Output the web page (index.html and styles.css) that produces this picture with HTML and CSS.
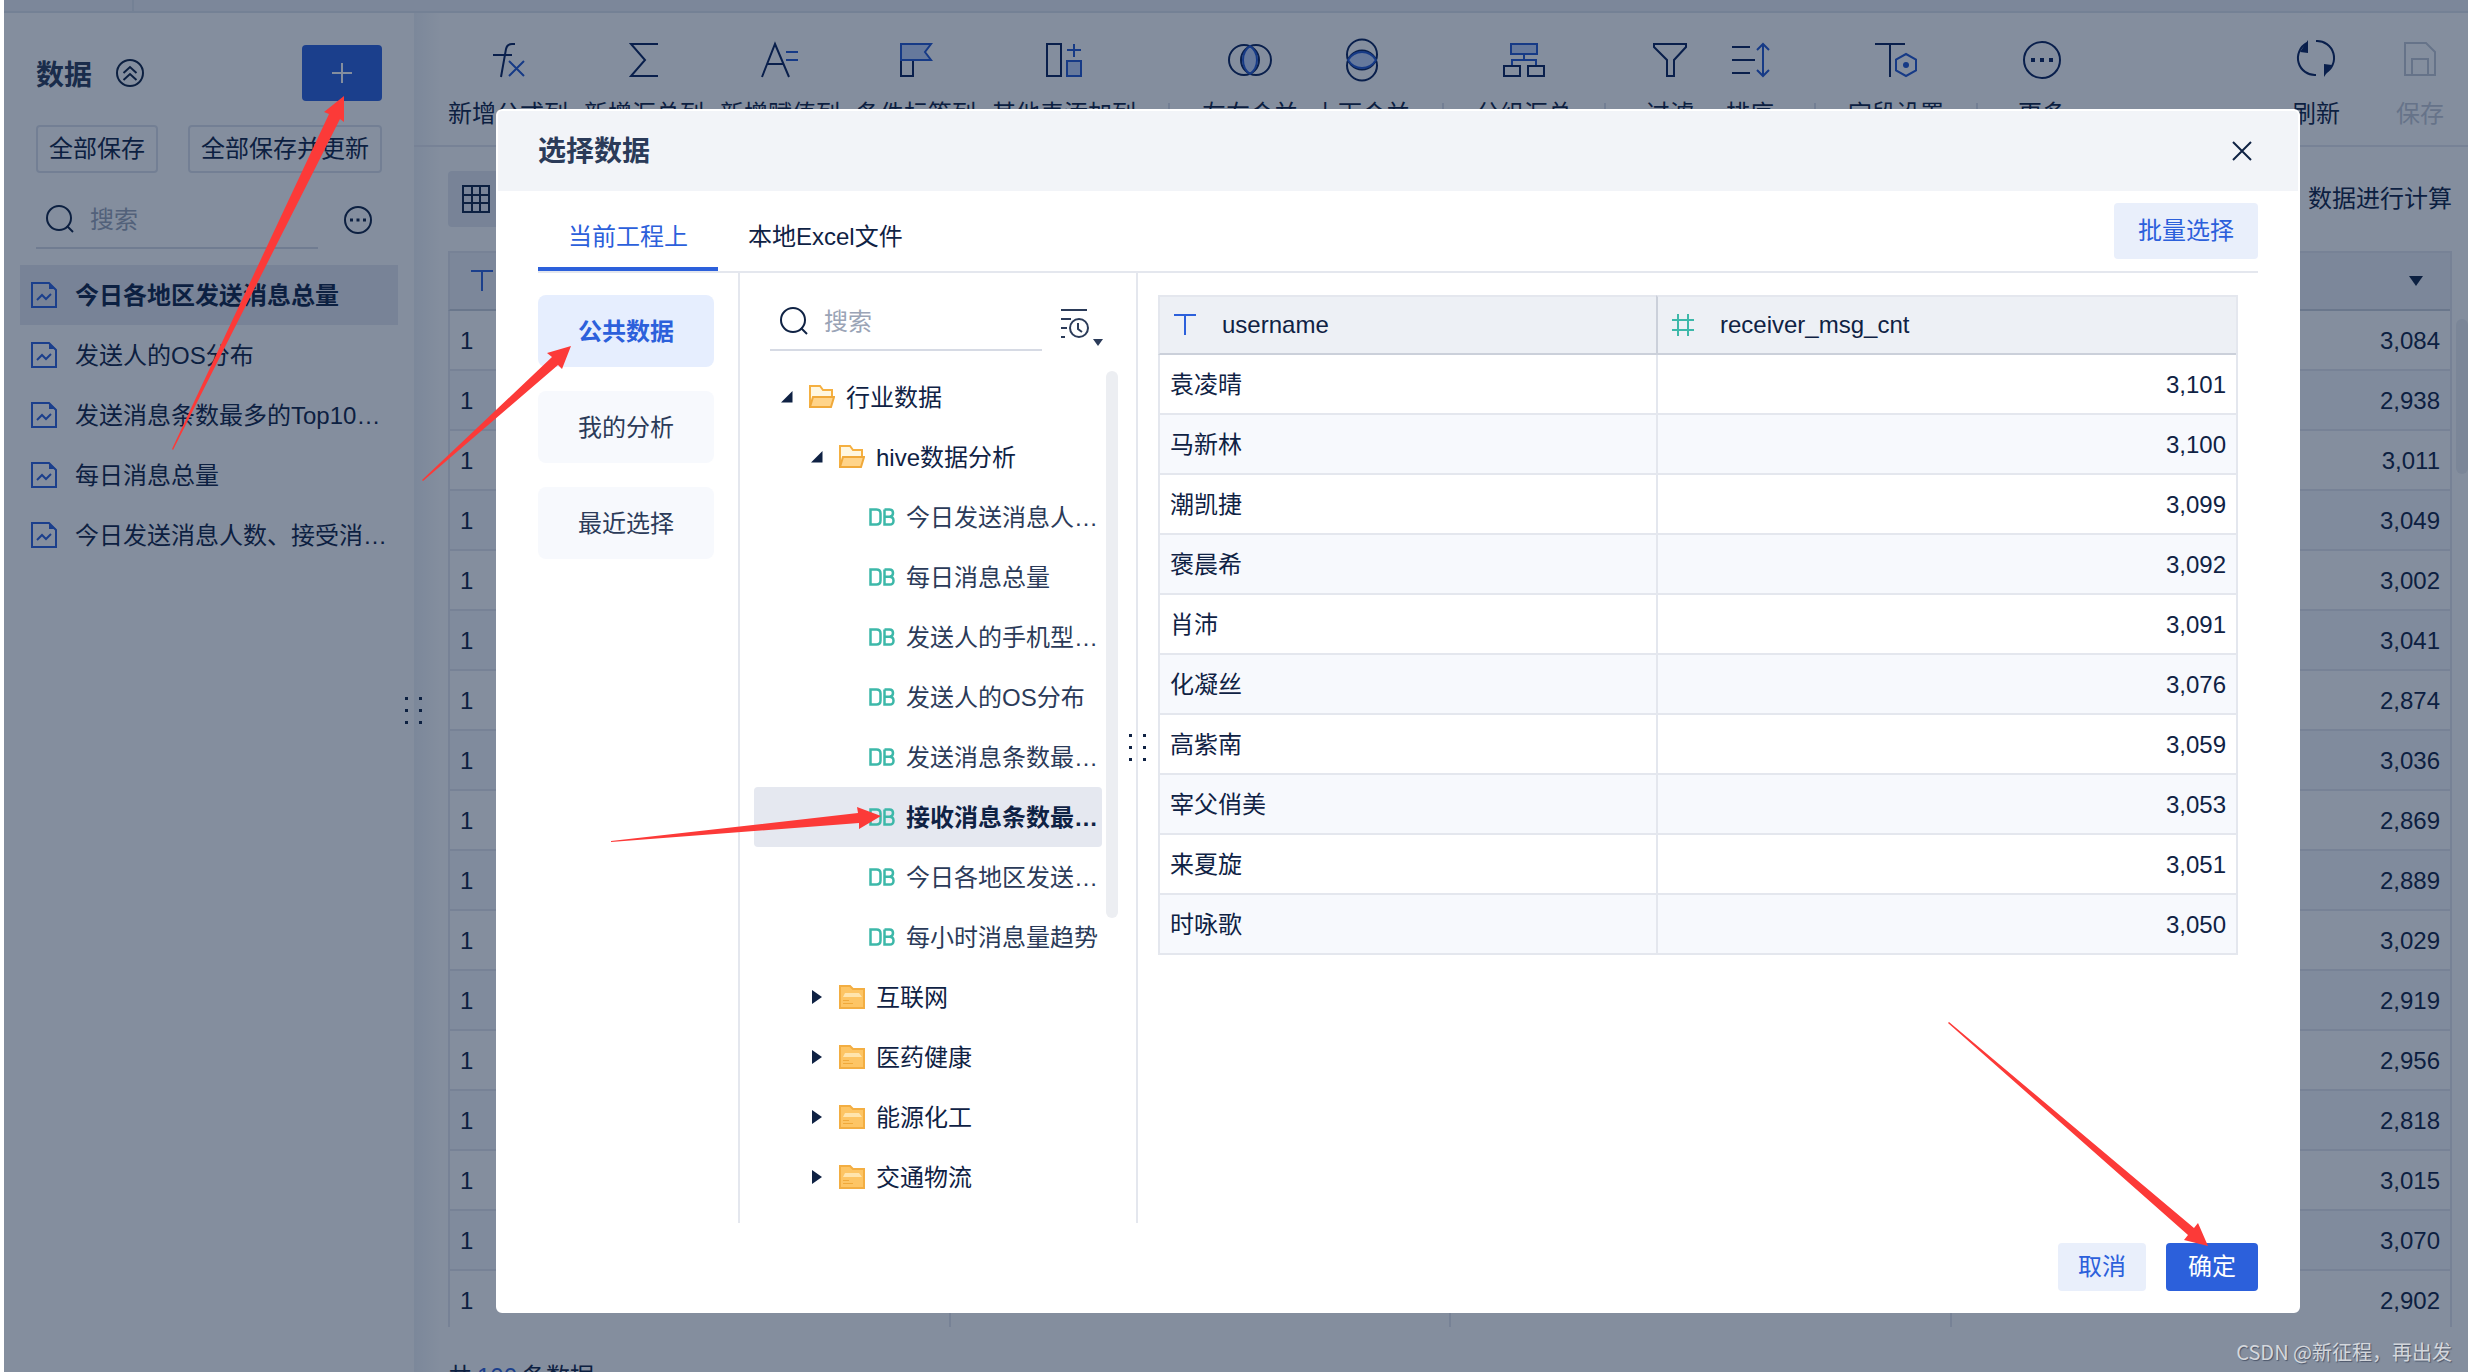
FILE: index.html
```html
<!DOCTYPE html>
<html lang="zh-CN">
<head>
<meta charset="utf-8">
<title>选择数据</title>
<meta name="viewport" content="width=device-width, initial-scale=1">
<link rel="stylesheet" href="styles.css">
</head>
<body>
<svg class="sprite" aria-hidden="true">
  <symbol id="i-search" viewBox="0 0 28 28"><circle cx="13" cy="13" r="12"/><path d="M21 21l6 6"/></symbol>
  <symbol id="i-chart" viewBox="0 0 26 26"><path d="M1 1h17l7 7v17H1z"/><path class="solid" d="M18 1l7 6h-7z"/><path d="M6 18l5-5 4 4 5-5"/></symbol>
  <symbol id="i-more" viewBox="0 0 28 28"><circle cx="14" cy="14" r="13"/><path class="dots" d="M6 12.500h3v3H6zM12.500 12.500h3v3h-3zM19 12.500h3v3h-3z"/></symbol>
  <symbol id="i-db" viewBox="0 0 26 18"><path stroke-width="2.500" d="M1.500 1.500h6q4 0 4 4v7q0 4-4 4h-6zM15.500 1.500h5q3.500 0 3.500 3.500t-3.500 3.700h-5M20.500 8.700q4 0 4 4t-4 3.800h-5V1.500"/></symbol>
  <symbol id="i-open" viewBox="0 0 26 24"><path fill="#fff7e0" stroke="#f5b041" stroke-width="2" d="M1 22V1h10l3 4h9v8"/><path fill="#ffd48a" stroke="#f0a93a" stroke-width="2" d="M4 12h21l-3 10H1z"/></symbol>
  <symbol id="i-folder" viewBox="0 0 26 24"><path fill="#fdc565" stroke="#f3ae42" stroke-width="2" d="M1 1h10l3 3h11v19H1z"/><path fill="#ffe5ae" d="M6 8h14l3 4H4z"/><path stroke="#f0a93a" stroke-width="1" d="M4 15.500h6M4 18.500h10"/></symbol>
  <symbol id="i-caret-open" viewBox="0 0 12 12"><path d="M11.500 0v11.500H0z"/></symbol>
  <symbol id="i-caret" viewBox="0 0 12 14"><path d="M1 0l10 7-10 7z"/></symbol>
  <symbol id="i-text" viewBox="0 0 24 24"><path d="M1 2h22M12 2v20"/></symbol>
  <symbol id="i-down" viewBox="0 0 16 12"><path d="M1 1h14L8 11z"/></symbol>
  <symbol id="i-grip" viewBox="0 0 18 28"><path d="M0 0h3v3H0zM14 0h3v3h-3zM0 12h3v3H0zM14 12h3v3h-3zM0 24h3v3H0zM14 24h3v3h-3z"/></symbol>
</svg>

<div class="app">
  <div class="topbar"><div class="topbar-tab"></div></div>
  <div class="workspace">
    <aside class="sidebar">
      <div class="side-head">
        <h1 class="side-title">数据</h1>
        <svg class="ico28" viewBox="0 0 28 28"><circle cx="14" cy="14" r="13"/><path d="M7.500 14l6.500-6 6.500 6M7.500 21l6.500-6 6.500 6"/></svg>
        <button class="add" aria-label="添加"><svg viewBox="0 0 22 22"><path d="M11 1v20M1 11h20"/></svg></button>
      </div>
      <div class="side-actions"><button class="ghost">全部保存</button><button class="ghost">全部保存并更新</button></div>
      <div class="side-search">
        <label class="search"><svg class="ico28"><use href="#i-search"/></svg><input type="text" placeholder="搜索" aria-label="搜索数据"></label>
        <svg class="ico28"><use href="#i-more"/></svg>
      </div>
      <ul class="data-list">
        <li class="data-item current"><svg><use href="#i-chart"/></svg><span>今日各地区发送消息总量</span></li>
        <li class="data-item"><svg><use href="#i-chart"/></svg><span>发送人的OS分布</span></li>
        <li class="data-item"><svg><use href="#i-chart"/></svg><span>发送消息条数最多的Top10用户</span></li>
        <li class="data-item"><svg><use href="#i-chart"/></svg><span>每日消息总量</span></li>
        <li class="data-item"><svg><use href="#i-chart"/></svg><span>今日发送消息人数、接受消息人数</span></li>
      </ul>
      <svg class="grip side-grip"><use href="#i-grip"/></svg>
    </aside>

    <main class="main">
      <div class="toolbar">
        <button class="tool"><svg viewBox="0 0 44 44"><path d="M29 6h-3q-5 0-6 5l-5 28M7 17h19"/><path class="blue" d="M23 23l15 15M38 23L23 38"/></svg><span>新增公式列</span></button>
        <button class="tool"><svg viewBox="0 0 44 44"><path d="M36 6H9l14 16L9 38h27"/></svg><span>新增汇总列</span></button>
        <button class="tool"><svg viewBox="0 0 44 44"><path d="M4 39L17 6l14 33M9 26h17"/><path class="blue" d="M28 14h12M28 22h12"/></svg><span>新增赋值列</span></button>
        <button class="tool"><svg viewBox="0 0 44 44"><path d="M7 21v17h12V21"/><path class="blue fill" d="M7 6h30l-6 8 6 8H7z"/></svg><span>条件标签列</span></button>
        <button class="tool"><svg viewBox="0 0 44 44"><path d="M5 6h14v32H5z"/><path class="blue" d="M32 6v13M25 12h14"/><path class="blue fill" d="M25 23h14v15H25z"/></svg><span>其他表添加列</span></button>
        <i class="sep"></i>
        <button class="tool"><svg viewBox="0 0 44 44"><path class="fill nostroke" d="M22 8q7 5 7 14t-7 14q-7-5-7-14t7-14z"/><circle cx="16" cy="22" r="15"/><circle cx="28" cy="22" r="15"/><path class="blue" d="M22 8q-7 5-7 14t7 14q7-5 7-14t-7-14z"/></svg><span>左右合并</span></button>
        <button class="tool"><svg viewBox="0 0 44 44"><circle cx="22" cy="16.500" r="15"/><circle cx="22" cy="27.500" r="15"/><path class="blue fill" d="M8 22q5-8 14-8t14 8q-5 8-14 8t-14-8z"/></svg><span>上下合并</span></button>
        <i class="sep"></i>
        <button class="tool"><svg viewBox="0 0 44 44"><path class="blue fill" d="M9 6h26v10H9z"/><path class="blue" d="M22 16v6M10 28v-6h24v6"/><path d="M2 28h16v10H2zM26 28h16v10H26z"/></svg><span>分组汇总</span></button>
        <i class="sep"></i>
        <button class="tool"><svg viewBox="0 0 44 44"><path d="M6 6h32v3L26 22v16h-7V22L6 9z"/></svg><span>过滤</span></button>
        <button class="tool"><svg viewBox="0 0 44 44"><path d="M4 9h18M4 22h23M4 35h18"/><path class="blue" d="M35 6v32M29 12l6-6 6 6M29 32l6 6 6-6"/></svg><span>排序</span></button>
        <i class="sep"></i>
        <button class="tool"><svg viewBox="0 0 44 44"><path d="M1 6h30M16 6v33"/><path class="blue" d="M32 16l10 5.500v11L32 38l-10-5.500v-11z"/><circle class="bluedot" cx="32" cy="27" r="3"/></svg><span>字段设置</span></button>
        <i class="sep"></i>
        <button class="tool"><svg viewBox="0 0 44 44"><circle cx="22" cy="22" r="18"/><path class="dots" d="M11 20h4v4h-4zM20 20h4v4h-4zM29 20h4v4h-4z"/></svg><span>更多</span></button>
        <div class="tool-end">
          <button class="tool"><svg viewBox="0 0 44 44"><path d="M22 3a17 17 0 0 1 9 32M22 37A17 17 0 0 1 13 5"/><path class="dots" d="M6 14l8-12v13zM38 27l-8 12V26z"/></svg><span>刷新</span></button>
          <button class="tool off" disabled><svg viewBox="0 0 44 44"><path d="M7 5h21l9 9v23H7zM14 37V21h16v16"/></svg><span>保存</span></button>
        </div>
      </div>
      <div class="viewbar">
        <button class="view-switch" aria-label="表格视图"><svg viewBox="0 0 28 28"><path d="M1 1h26v26H1zM1 10h26M1 18h26M10 1v26M18 1v26"/></svg></button>
        <span>数据进行计算</span>
      </div>
      <div class="grid-area">
        <table class="grid back-grid">
          <thead><tr><th><svg class="type"><use href="#i-text"/></svg></th><th></th><th></th><th class="num"><svg class="down"><use href="#i-down"/></svg></th></tr></thead>
          <tbody>
            <tr><td>1</td><td></td><td></td><td class="num">3,084</td></tr>
            <tr><td>1</td><td></td><td></td><td class="num">2,938</td></tr>
            <tr><td>1</td><td></td><td></td><td class="num">3,011</td></tr>
            <tr><td>1</td><td></td><td></td><td class="num">3,049</td></tr>
            <tr><td>1</td><td></td><td></td><td class="num">3,002</td></tr>
            <tr><td>1</td><td></td><td></td><td class="num">3,041</td></tr>
            <tr><td>1</td><td></td><td></td><td class="num">2,874</td></tr>
            <tr><td>1</td><td></td><td></td><td class="num">3,036</td></tr>
            <tr><td>1</td><td></td><td></td><td class="num">2,869</td></tr>
            <tr><td>1</td><td></td><td></td><td class="num">2,889</td></tr>
            <tr><td>1</td><td></td><td></td><td class="num">3,029</td></tr>
            <tr><td>1</td><td></td><td></td><td class="num">2,919</td></tr>
            <tr><td>1</td><td></td><td></td><td class="num">2,956</td></tr>
            <tr><td>1</td><td></td><td></td><td class="num">2,818</td></tr>
            <tr><td>1</td><td></td><td></td><td class="num">3,015</td></tr>
            <tr><td>1</td><td></td><td></td><td class="num">3,070</td></tr>
            <tr><td>1</td><td></td><td></td><td class="num">2,902</td></tr>
          </tbody>
        </table>
        <div class="grid-scroll"></div>
      </div>
      <p class="total">共<b>100</b>条数据</p>
    </main>
  </div>

  <div class="mask">
    <section class="dialog" role="dialog" aria-labelledby="dlg-title">
      <header class="dlg-head">
        <h2 id="dlg-title">选择数据</h2>
        <button class="close" aria-label="关闭"><svg viewBox="0 0 22 22"><path d="M2 2l18 18M20 2L2 20"/></svg></button>
      </header>
      <div class="tabs">
        <button class="tab active">当前工程上</button>
        <button class="tab">本地Excel文件</button>
        <button class="btn soft batch">批量选择</button>
      </div>
      <div class="dlg-body">
        <nav class="sources">
          <button class="source active">公共数据</button>
          <button class="source">我的分析</button>
          <button class="source">最近选择</button>
        </nav>
        <div class="picker">
          <div class="picker-search">
            <label class="search"><svg class="ico28"><use href="#i-search"/></svg><input type="text" placeholder="搜索" aria-label="搜索目录"></label>
            <button class="sort" aria-label="排序方式"><svg viewBox="0 0 44 40"><path d="M1 2h26M1 11h10M1 20h6M1 29h4"/><circle cx="19" cy="20" r="9"/><path d="M18 15v6l4 3"/><path class="dots" d="M33 31h10l-5 7z"/></svg></button>
          </div>
          <div class="tree-wrap">
            <ul class="tree">
              <li class="node l1"><svg class="caret"><use href="#i-caret-open"/></svg><svg class="folder"><use href="#i-open"/></svg><span>行业数据</span></li>
              <li class="node l2"><svg class="caret"><use href="#i-caret-open"/></svg><svg class="folder"><use href="#i-open"/></svg><span>hive数据分析</span></li>
              <li class="node l3"><svg class="db"><use href="#i-db"/></svg><span>今日发送消息人数统计</span></li>
              <li class="node l3"><svg class="db"><use href="#i-db"/></svg><span>每日消息总量</span></li>
              <li class="node l3"><svg class="db"><use href="#i-db"/></svg><span>发送人的手机型号分布</span></li>
              <li class="node l3"><svg class="db"><use href="#i-db"/></svg><span>发送人的OS分布</span></li>
              <li class="node l3"><svg class="db"><use href="#i-db"/></svg><span>发送消息条数最多用户</span></li>
              <li class="node l3 picked"><svg class="db"><use href="#i-db"/></svg><span>接收消息条数最多用户</span></li>
              <li class="node l3"><svg class="db"><use href="#i-db"/></svg><span>今日各地区发送总量</span></li>
              <li class="node l3"><svg class="db"><use href="#i-db"/></svg><span>每小时消息量趋势</span></li>
              <li class="node l2"><svg class="caret"><use href="#i-caret"/></svg><svg class="folder"><use href="#i-folder"/></svg><span>互联网</span></li>
              <li class="node l2"><svg class="caret"><use href="#i-caret"/></svg><svg class="folder"><use href="#i-folder"/></svg><span>医药健康</span></li>
              <li class="node l2"><svg class="caret"><use href="#i-caret"/></svg><svg class="folder"><use href="#i-folder"/></svg><span>能源化工</span></li>
              <li class="node l2"><svg class="caret"><use href="#i-caret"/></svg><svg class="folder"><use href="#i-folder"/></svg><span>交通物流</span></li>
            </ul>
            <div class="tree-scroll"></div>
          </div>
          <svg class="grip picker-grip"><use href="#i-grip"/></svg>
        </div>
        <div class="preview">
          <table class="grid">
            <colgroup><col class="col-name"><col></colgroup>
            <thead><tr>
              <th><div class="th"><svg class="type"><use href="#i-text"/></svg>username</div></th>
              <th><div class="th"><svg class="type green" viewBox="0 0 24 24"><path d="M7 1v22M17 1v22M1 7h22M1 17h22"/></svg>receiver_msg_cnt</div></th>
            </tr></thead>
            <tbody>
              <tr><td>袁凌晴</td><td class="num">3,101</td></tr>
              <tr><td>马新林</td><td class="num">3,100</td></tr>
              <tr><td>潮凯捷</td><td class="num">3,099</td></tr>
              <tr><td>褒晨希</td><td class="num">3,092</td></tr>
              <tr><td>肖沛</td><td class="num">3,091</td></tr>
              <tr><td>化凝丝</td><td class="num">3,076</td></tr>
              <tr><td>高紫南</td><td class="num">3,059</td></tr>
              <tr><td>宰父俏美</td><td class="num">3,053</td></tr>
              <tr><td>来夏旋</td><td class="num">3,051</td></tr>
              <tr><td>时咏歌</td><td class="num">3,050</td></tr>
            </tbody>
          </table>
        </div>
      </div>
      <footer class="dlg-foot">
        <button class="btn soft">取消</button>
        <button class="btn primary">确定</button>
      </footer>
    </section>
  </div>
</div>

<svg class="arrows" viewBox="0 0 2468 1372" aria-hidden="true">
  <path d="M344 96L324 112 329 114 172 449 173 450 340 119 344 122z"/>
  <path d="M571 346L547 353 552 357 422 480 423 481 558 365 562 369z"/>
  <path d="M881 816L857 807 858 813 611 841 611 842 859 823 859 829z"/>
  <path d="M2208 1246L2198 1223 2194 1228 1949 1022 1948 1023 2188 1235 2184 1240z"/>
</svg>
<div class="watermark">CSDN @新征程，再出发</div>
</body>
</html>
```
FILE: styles.css
```css
:root {
  --ink: #0f2244;
  --ink-soft: #2b3b59;
  --blue: #2c60db;
  --line: #e4e7ee;
  --line-strong: #cbd0da;
  --zebra: #f7f9fd;
}

* { box-sizing: border-box; }

body {
  margin: 0;
  padding-left: 4px;
  height: 100vh;
  overflow: hidden;
  background: #fff;
  color: var(--ink);
  font: 24px/36px "Liberation Sans", "Noto Sans CJK SC", sans-serif;
}

button, input { font: inherit; color: inherit; }
button { border: 0; padding: 0; background: none; cursor: pointer; }
ul { list-style: none; margin: 0; padding: 0; }
h1, h2, p { margin: 0; }
svg { flex: none; display: block; fill: none; stroke: currentColor; stroke-width: 2; }
.sprite { position: absolute; width: 0; height: 0; }
.solid, .dots { fill: currentColor; stroke: none; }
.ico28 { width: 28px; height: 28px; }
.grip { width: 18px; height: 28px; fill: var(--ink); stroke: none; }

.app { position: relative; height: 100%; overflow: hidden; display: flex; flex-direction: column; }

.topbar { flex: none; height: 13px; background: #eef1f6; border-bottom: 2px solid #dfe4ec; }
.topbar-tab { width: 130px; height: 11px; border-right: 2px solid #dfe4ec; }

.workspace { flex: 1; min-height: 0; display: flex; }

/* sidebar */
.sidebar { position: relative; flex: none; width: 410px; padding: 32px 16px 0; }
.side-head { display: flex; align-items: center; padding: 0 16px; height: 56px; }
.side-title { font-size: 28px; line-height: 40px; padding-top: 6px; color: var(--ink-soft); margin-right: 24px; }
.add { margin-left: auto; width: 80px; height: 56px; border-radius: 4px; background: var(--blue); color: #fff; display: grid; place-items: center; }
.add svg { width: 22px; height: 22px; }
.side-actions { display: flex; justify-content: space-between; padding: 24px 16px 0; }
.ghost { height: 48px; padding: 0 11px; border: 2px solid #dde1ea; border-radius: 4px; line-height: 44px; }
.side-search { display: flex; align-items: center; justify-content: space-between; padding: 18px 26px 16px 16px; }
.search { display: flex; align-items: center; gap: 16px; height: 58px; padding-left: 10px; border-bottom: 2px solid #d6dae4; }
.search input { width: 100%; min-width: 0; border: 0; padding: 2px 0 0; outline: 0; background: none; height: 38px; }
.search input::placeholder { color: #9aa4b6; opacity: 1; }
.side-search .search { width: 282px; }
.data-item { display: flex; align-items: center; gap: 18px; height: 60px; padding: 0 10px 0 11px; }
.data-item svg { width: 26px; height: 26px; color: var(--blue); }
.data-item span { padding-top: 2px; overflow: hidden; white-space: nowrap; text-overflow: ellipsis; }
.data-item.current { background: #e6e9f1; font-weight: bold; }
.side-grip { position: absolute; right: -9px; top: calc(50% + 4px); }

/* main area */
.main { flex: 1; min-width: 0; display: flex; flex-direction: column; background: linear-gradient(90deg, #eef2f7, #fff 28px); }
.toolbar { flex: none; display: flex; gap: 16px; height: 134px; padding: 25px 16px 0 34px; border-bottom: 2px solid var(--line); }
.tool { display: flex; flex-direction: column; align-items: center; gap: 14px; min-width: 64px; height: 94px; white-space: nowrap; }
.tool svg { width: 44px; height: 44px; color: #09215a; stroke-width: 2; }
.tool .blue { stroke: #2256cf; }
.tool .fill { fill: #c2d4fb; }
.tool .bluedot { fill: #2256cf; stroke: none; }
.tool .fill.nostroke { stroke: none; }
.tool.off, .tool.off svg { color: #c3c9d5; }
.sep { width: 2px; height: 20px; margin: 65px 16px 0; background: #dde1ea; }
.tool-end { display: flex; gap: 40px; margin-left: auto; }

.viewbar { flex: none; display: flex; align-items: center; justify-content: space-between; padding: 24px 16px 24px 34px; }
.view-switch { width: 56px; height: 56px; border-radius: 4px; background: #e6e9f1; display: grid; place-items: center; }
.view-switch svg { width: 28px; height: 28px; }
.grid-area { flex: none; height: 1076px; overflow: hidden; display: flex; padding-left: 34px; gap: 4px; }
.grid-scroll { flex: none; width: 12px; height: 155px; margin-top: 68px; border-radius: 6px; background: #eceff3; }
.total { padding: 32px 34px; white-space: nowrap; }
.total b { margin: 0 5px; font-weight: normal; color: var(--blue); }

/* data tables */
.grid { width: 100%; table-layout: fixed; border-collapse: separate; border-spacing: 0; border-right: 2px solid var(--line); }
.grid tr { height: 60px; }
.grid th { padding: 0 13px; font-weight: normal; text-align: left; background: #edf0f5; border-top: 2px solid var(--line); border-bottom: 2px solid var(--line-strong); border-left: 2px solid var(--line-strong); }
.grid th:first-child { border-left-color: var(--line); }
.grid td { padding: 2px 10px 0; border-bottom: 2px solid var(--line); border-left: 2px solid var(--line); }
.grid tbody tr:nth-child(even) { background: var(--zebra); }
.grid .num { text-align: right; }
.back-grid th { padding: 0 20px; background: #eef1f7; }
.back-grid th, .back-grid th.num { padding-right: 26px; }
.type { width: 24px; height: 24px; color: var(--blue); }
.type.green { color: #3db8a9; }
.down { width: 16px; height: 12px; margin-left: auto; fill: var(--ink); stroke: none; }
.th { display: flex; align-items: center; gap: 25px; }
.col-name { width: 498px; }

/* dialog */
.mask { position: absolute; inset: 0; background: rgba(10, 29, 61, 0.5); padding: 109px 168px 0 492px; }
.dialog { border: 2px solid #fff; border-radius: 6px; background: #fff; overflow: hidden; }
.dlg-head { display: flex; align-items: center; justify-content: space-between; height: 80px; padding: 0 45px 0 40px; background: #f2f4f8; }
.dlg-head h2 { font-size: 28px; line-height: 40px; padding-top: 2px; color: var(--ink-soft); }
.close, .close svg { width: 22px; height: 22px; }
.tabs { display: flex; height: 82px; margin: 0 40px; border-bottom: 2px solid var(--line); }
.tab { padding: 16px 30px 0; border-bottom: 4px solid transparent; white-space: nowrap; }
.tab.active { color: var(--blue); border-color: var(--blue); }
.btn { height: 48px; padding: 0 20px; border-radius: 4px; white-space: nowrap; }
.btn.soft { background: #e9effb; color: var(--blue); }
.btn.primary { background: var(--blue); color: #fff; padding: 0 22px; }
.btn.batch { height: 56px; margin: 12px 0 0 auto; padding: 0 24px; }

.dlg-body { display: flex; height: 950px; padding: 0 60px 0 40px; }
.sources { flex: none; width: 200px; padding: 22px 24px 0 0; display: flex; flex-direction: column; gap: 24px; }
.source { height: 72px; padding-top: 2px; border-radius: 8px; background: var(--zebra); color: var(--ink-soft); }
.source.active { background: #e6eefe; color: var(--blue); font-weight: bold; }

.picker { position: relative; flex: none; width: 400px; border: solid var(--line); border-width: 0 2px; padding: 20px 18px 0 14px; }
.picker-search { display: flex; gap: 18px; padding: 0 0 16px 16px; }
.picker-search .search { flex: none; width: 272px; }
.sort { width: 44px; height: 40px; margin-top: 15px; }
.sort svg { width: 44px; height: 40px; color: var(--ink-soft); }
.tree-wrap { display: flex; gap: 4px; }
.tree { width: 348px; }
.node { display: flex; align-items: center; height: 60px; padding-right: 4px; border-radius: 4px; }
.node span { padding-top: 2px; overflow: hidden; white-space: nowrap; text-overflow: ellipsis; }
.l1 { padding-left: 27px; }
.l2 { padding-left: 57px; }
.l3 { padding-left: 115px; color: var(--ink-soft); }
.caret { width: 12px; height: 14px; margin-right: 16px; fill: var(--ink); stroke: none; }
.folder { width: 26px; height: 24px; margin-right: 11px; stroke: none; }
.db { width: 26px; height: 18px; margin-right: 11px; color: #3db8a9; }
.picked { background: #e5e8f0; color: var(--ink); font-weight: bold; }
.tree-scroll { flex: none; width: 12px; height: 547px; margin-top: 4px; border-radius: 6px; background: #eceef2; }
.picker-grip { position: absolute; right: -11px; top: 461px; }

.preview { flex: 1; min-width: 0; padding: 22px 0 0 20px; }

.dlg-foot { display: flex; justify-content: flex-end; gap: 20px; height: 88px; padding: 20px 40px 0; }

/* pointers drawn over the page */
.arrows { position: absolute; left: 0; top: 0; width: 100vw; pointer-events: none; fill: #fc3a38; stroke: none; }
.watermark { position: absolute; right: 16px; bottom: 4px; font: 20px/32px "Noto Sans CJK TC", sans-serif; color: #d4d7dc; text-shadow: 1px 1px 1px #4c566a; }
```
